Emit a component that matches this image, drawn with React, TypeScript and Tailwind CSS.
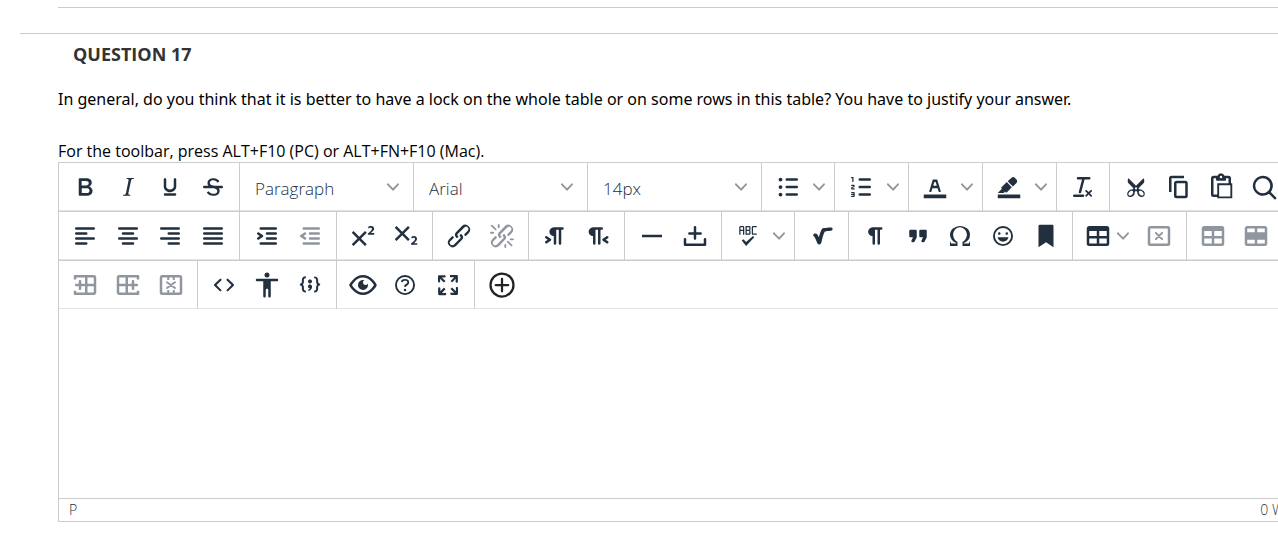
import type { ReactNode } from "react";

const bar = (x1: number, x2: number, y: number) => `M${x1} ${y}H${x2}`;

function Svg({ children }: { children: ReactNode }) {
  return (
    <svg viewBox="0 0 24 24" className="size-[30px] shrink-0" fill="currentColor" aria-hidden="true">
      {children}
    </svg>
  );
}

function Lines({ d }: { d: string }) {
  return <path d={d} fill="none" stroke="currentColor" strokeWidth="2" strokeLinecap="round" />;
}

const LINK =
  "M6.2 12.3a1 1 0 011.4 1.4l-2.1 2a2 2 0 102.7 2.8l4.8-4.8a1 1 0 000-1.4 1 1 0 111.4-1.3 2.9 2.9 0 010 4L9.6 20a3.9 3.9 0 01-5.5-5.5l2-2zm11.6-.6a1 1 0 01-1.4-1.4l2-2a2 2 0 10-2.6-2.8L11 10.3a1 1 0 000 1.4A1 1 0 119.6 13a2.9 2.9 0 010-4L14.4 4a3.9 3.9 0 015.5 5.5l-2 2z";

const TABLE =
  "M19 4a2 2 0 012 2v12a2 2 0 01-2 2H5a2 2 0 01-2-2V6c0-1.1.9-2 2-2h14zM5 14v4h6v-4H5zm14 0h-6v4h6v-4zm0-6h-6v4h6V8zM5 12h6V8H5v4z";

const COLUMN_BEFORE = (
  <>
    <path
      fillRule="evenodd"
      d="M19 4a2 2 0 012 2v12c0 1.1-.9 2-2 2H4a1 1 0 01-1-1v-2.5h2V18h7V6H5v1.5H3V5a1 1 0 011-1h15zm0 9h-5v5h5v-5zm0-7h-5v5h5V6z"
    />
    <path d="M8 8c.5 0 1 .4 1 .9V11h2a1 1 0 01.1 2H9v2a1 1 0 01-2 .1V13H5a1 1 0 01-.1-2H7V9c0-.6.4-1 1-1z" />
  </>
);

const ICONS: Record<string, ReactNode> = {
  bold: (
    <path d="M7.8 19c-.3 0-.5 0-.6-.2l-.2-.5V5.7c0-.2 0-.4.2-.5l.6-.2h5c1.5 0 2.7.3 3.5 1 .7.6 1.1 1.4 1.1 2.5a3 3 0 01-.6 1.9c-.4.6-1 1-1.6 1.2.4.1.9.3 1.3.6s.8.7 1 1.2c.4.4.5 1 .5 1.6 0 1.3-.4 2.3-1.3 3-.8.7-2.1 1-3.8 1H7.8zm5-8.3c.6 0 1.2-.1 1.6-.5.4-.3.6-.7.6-1.3 0-1.1-.8-1.7-2.3-1.7H9.3v3.5h3.4zm.5 6c.7 0 1.3-.1 1.7-.4.4-.4.6-.9.6-1.5s-.2-1-.7-1.4c-.4-.3-1-.4-2-.4H9.4v3.8h4z" />
  ),
  italic: (
    <path d="M16.7 4.7l-.1.9h-.3c-.6 0-1 0-1.4.3-.3.3-.4.6-.5 1.1l-2.1 9.8v.6c0 .5.4.8 1.4.8h.2l-.2.8H8l.2-.8h.2c1.1 0 1.8-.5 2-1.5l2-9.8.1-.5c0-.6-.4-.8-1.4-.8h-.3l.2-.9h5.8z" />
  ),
  underline: (
    <path d="M16 5c.6 0 1 .4 1 1v5.5a4 4 0 01-.4 1.8l-1 1.4a5.3 5.3 0 01-5.5 1 5 5 0 01-1.6-1c-.5-.4-.8-.9-1.1-1.4a4 4 0 01-.4-1.8V6c0-.6.4-1 1-1s1 .4 1 1v5.5c0 .3 0 .6.2 1l.6.7a3.3 3.3 0 002.2.8 3.4 3.4 0 002.2-.8c.3-.2.4-.5.6-.8l.2-.9V6c0-.6.4-1 1-1zM8 17h8c.6 0 1 .4 1 1s-.4 1-1 1H8a1 1 0 010-2z" />
  ),
  strike: (
    <>
      <path d="M15.6 8.5c-.5-.7-1-1.1-1.3-1.3-.6-.4-1.3-.6-2-.6-2.7 0-2.8 1.7-2.8 2.1 0 1.6 1.8 2 3.2 2.3 4.4.9 4.6 2.8 4.6 3.9 0 1.4-.7 4.1-5 4.1A6.2 6.2 0 017 16.4l1.5-1.1c.4.6 1.6 2 3.7 2 1.6 0 2.5-.4 3-1.2.4-.8.3-2-.8-2.6-.7-.4-1.6-.7-2.9-1-1-.2-3.9-.8-3.9-3.6C7.6 6 10.3 5 12.4 5c2.9 0 4.2 1.6 4.7 2.4l-1.5 1.1z" />
      <path d="M5 11h14a1 1 0 010 2H5a1 1 0 010-2z" />
    </>
  ),
  bullets: (
    <>
      <Lines d={bar(11, 19, 6) + bar(11, 19, 12) + bar(11, 19, 18)} />
      <circle cx="6" cy="6" r="1.5" />
      <circle cx="6" cy="12" r="1.5" />
      <circle cx="6" cy="18" r="1.5" />
    </>
  ),
  numbers: (
    <>
      <Lines d={bar(11, 19, 6) + bar(11, 19, 12) + bar(11, 19, 18)} />
      <path d="M6 4v3.5c0 .3-.2.5-.5.5a.5.5 0 01-.5-.5V5h-.5a.5.5 0 010-1H6zm-1 8.8l.2.2h1.3c.3 0 .5.2.5.5s-.2.5-.5.5H4.9a1 1 0 01-.9-1V13c0-.4.3-.8.6-1l1.2-.4.2-.3a.2.2 0 00-.2-.2H4.5a.5.5 0 01-.5-.5c0-.3.2-.5.5-.5h1.6c.5 0 .9.4.9 1v.1c0 .4-.3.8-.6 1l-1.2.4-.2.3zM7 17v2c0 .6-.4 1-1 1H4.5a.5.5 0 010-1h1.2c.2 0 .3-.1.3-.3 0-.2-.1-.3-.3-.3H4.4a.4.4 0 110-.8h1.3c.2 0 .3-.1.3-.3 0-.2-.1-.3-.3-.3H4.5a.5.5 0 110-1H6c.6 0 1 .4 1 1z" />
    </>
  ),
  textColor: (
    <>
      <path d="M3 18h18v3H3z" />
      <path d="M8.7 16h-.8a.5.5 0 01-.5-.6l2.7-9c.1-.3.3-.4.5-.4h2.8c.2 0 .4.1.5.4l2.7 9a.5.5 0 01-.5.6h-.8a.5.5 0 01-.4-.4l-.7-2.2c0-.3-.3-.4-.5-.4h-3.4c-.2 0-.4.1-.5.4l-.7 2.2c0 .3-.2.4-.4.4zm2.6-7.6l-.6 2a.5.5 0 00.5.6h1.6a.5.5 0 00.5-.6l-.6-2c0-.3-.3-.4-.5-.4h-.4c-.2 0-.4.1-.5.4z" />
    </>
  ),
  highlight: (
    <>
      <path d="M3 18h18v3H3z" />
      <path d="M7.7 16.7H3l3.3-3.3-.7-.8L10.2 8l4 4.1-4 4.2c-.2.2-.6.2-.8 0l-.6-.7-1.1 1.1zm5-7.5L11 7.4l3-2.9a2 2 0 012.6 0L18 6c.7.7.7 2 0 2.7l-2.9 2.9-1.8-1.8-.6-.6z" />
    </>
  ),
  clear: (
    <path d="M13.2 6a1 1 0 010 .2l-2.6 10a1 1 0 01-1 .8h-.2a.8.8 0 01-.8-1l2.6-10H8a1 1 0 110-2h9a1 1 0 010 2h-3.8zM5 18h7a1 1 0 010 2H5a1 1 0 010-2zm13 1.5L16.5 18 15 19.5a.7.7 0 01-1-1l1.5-1.5-1.5-1.5a.7.7 0 011-1l1.5 1.5 1.5-1.5a.7.7 0 011 1L17.5 17l1.5 1.5a.7.7 0 01-1 1z" />
  ),
  cut: (
    <path
      fillRule="evenodd"
      d="M18 15c.6.7 1 1.4 1 2.3 0 .8-.2 1.5-.7 2l-.8.5-1 .2c-.4 0-.8 0-1.2-.3a3.9 3.9 0 01-2.1-2.2c-.2-.5-.3-1-.2-1.5l-1-1-1 1c0 .5 0 1-.2 1.5-.1.5-.4 1-.9 1.4-.3.4-.7.6-1.2.8l-1.2.3c-.4 0-.7 0-1-.2-.3 0-.6-.3-.8-.5-.5-.5-.8-1.2-.7-2 0-.9.4-1.6 1-2.2A3.7 3.7 0 018.6 14H9l1-1-4-4-.5-1a3.3 3.3 0 010-2c0-.4.3-.7.5-1l6 6 6-6 .5 1a3.3 3.3 0 010 2c0 .4-.3.7-.5 1l-4 4 1 1h.5c.4 0 .8 0 1.2.3.5.2.9.4 1.2.8zM9.500 15.400c-.7-.6-2-.3-2.800.5s-1.100 2-.5 2.600 1.800.4 2.600-.4 1.300-2.100.7-2.700zm5 0c-.6.6-.1 1.900.7 2.700s2 1 2.600.4.300-1.800-.5-2.600-2.100-1.100-2.800-.5zM12 12.200a.9.9 0 100 1.800.9.9 0 000-1.800z"
    />
  ),
  copy: (
    <path d="M16 3H6a2 2 0 00-2 2v11h2V5h10V3zm1 4a2 2 0 012 2v10a2 2 0 01-2 2h-7a2 2 0 01-2-2V9c0-1.2.9-2 2-2h7zm0 12V9h-7v10h7z" />
  ),
  paste: (
    <path
      fillRule="evenodd"
      d="M18 9V5h-2v1c0 .6-.4 1-1 1H9a1 1 0 01-1-1V5H6v13h3V9h9zM9 20H6a2 2 0 01-2-2V5c0-1.1.9-2 2-2h3.2A3 3 0 0112 1a3 3 0 012.8 2H18a2 2 0 012 2v4h1v12H9v-1zm1.5-9.5v9h9v-9h-9zM12 3a1 1 0 00-1 1c0 .5.4 1 1 1s1-.5 1-1-.4-1-1-1z"
    />
  ),
  search: (
    <path d="M16 17.3a8 8 0 111.4-1.4l4.3 4.4a1 1 0 01-1.4 1.4l-4.4-4.3zm-5-.3a6 6 0 100-12 6 6 0 000 12z" />
  ),
  left: <Lines d={bar(5, 19, 6) + bar(5, 13, 10) + bar(5, 19, 14) + bar(5, 13, 18)} />,
  center: <Lines d={bar(5, 19, 6) + bar(8, 16, 10) + bar(5, 19, 14) + bar(8, 16, 18)} />,
  right: <Lines d={bar(5, 19, 6) + bar(11, 19, 10) + bar(5, 19, 14) + bar(11, 19, 18)} />,
  justify: <Lines d={bar(5, 19, 6) + bar(5, 19, 10) + bar(5, 19, 14) + bar(5, 19, 18)} />,
  indent: (
    <>
      <Lines d={bar(7, 19, 6) + bar(12, 19, 10) + bar(12, 19, 14) + bar(7, 19, 18)} />
      <path d="M4.4 13.2L6.2 12l-1.8-1.2a1 1 0 011.2-1.6l3 2a1 1 0 010 1.6l-3 2a1 1 0 11-1.2-1.6z" />
    </>
  ),
  outdent: (
    <>
      <Lines d={bar(7, 19, 6) + bar(12, 19, 10) + bar(12, 19, 14) + bar(7, 19, 18)} />
      <path d="M8.6 13.2a1 1 0 01-1.2 1.6l-3-2a1 1 0 010-1.6l3-2a1 1 0 011.2 1.6L6.8 12l1.8 1.2z" />
    </>
  ),
  superscript: (
    <path d="M15 9.4L10.4 14l4.6 4.6-1.4 1.4L9 15.4 4.4 20 3 18.6 7.6 14 3 9.4 4.4 8 9 12.6 13.6 8 15 9.4zm5.9 1.6h-5v-1l1-.8 1.7-1.6c.3-.5.5-.9.5-1.3 0-.3 0-.5-.2-.7-.2-.2-.5-.3-.9-.3l-.8.2-.7.4-.4-1.2c.2-.2.5-.4 1-.5.3-.2.8-.3 1.3-.3.8 0 1.5.2 1.9.6.4.4.6 1 .6 1.6 0 .5-.2 1-.5 1.5l-1.5 1.4-.5.5v.1h2.5V11z" />
  ),
  subscript: (
    <path d="M10.4 10l4.6 4.6-1.4 1.4L9 11.4 4.4 16 3 14.6 7.6 10 3 5.4 4.4 4 9 8.6 13.6 4 15 5.4 10.4 10zM21 19h-5v-1l1-.8 1.7-1.6c.3-.4.5-.8.5-1.2 0-.3 0-.6-.2-.7-.2-.2-.5-.3-.9-.3a2 2 0 00-.8.2l-.7.3-.4-1.1 1-.6 1.2-.2c.8 0 1.4.3 1.8.7.4.4.6.9.6 1.5s-.2 1.1-.5 1.6a8 8 0 01-1.3 1.3l-.6.6h2.6V19z" />
  ),
  link: <path d={LINK} />,
  unlink: (
    <>
      <path d={LINK} />
      <path d="M7.6 6.3a.8.8 0 01-1 1.1L3.3 4.2a.7.7 0 111-1l3.2 3.1zM5.1 8.6a.8.8 0 010 1.5H3a.8.8 0 010-1.5H5zm5-3.5a.8.8 0 01-1.5 0V3a.8.8 0 011.5 0V5zm6 11.8a.8.8 0 011-1l3.2 3.2a.8.8 0 01-1 1L16 17zm-2.2 2a.8.8 0 011.5 0V21a.8.8 0 01-1.5 0V19zm5-3.5a.7.7 0 110-1.5H21a.8.8 0 010 1.5H19z" />
    </>
  ),
  ltr: (
    <path d="M11 5h7a1 1 0 010 2h-1v11a1 1 0 01-2 0V7h-2v11a1 1 0 01-2 0v-6c-.5 0-1 0-1.4-.3A3.4 3.4 0 017.8 10a3.3 3.3 0 010-2.8 3.4 3.4 0 011.8-1.8L11 5zM4.4 16.2L6.2 15l-1.8-1.2a1 1 0 011.2-1.6l3 2a1 1 0 010 1.6l-3 2a1 1 0 11-1.2-1.6z" />
  ),
  rtl: (
    <path d="M8 5h7a1 1 0 010 2h-1v11a1 1 0 01-2 0V7h-2v11a1 1 0 01-2 0v-6c-.5 0-1 0-1.4-.3A3.4 3.4 0 014.8 10a3.3 3.3 0 010-2.8 3.4 3.4 0 011.8-1.8L8 5zm12 11.2a1 1 0 11-1.2 1.6l-3-2a1 1 0 010-1.6l3-2a1 1 0 111.2 1.6L18.2 15l1.8 1.2z" />
  ),
  rule: <path d="M4 11h16v2H4z" />,
  nbsp: (
    <>
      <path d="M3 14.5a1 1 0 012 0V18h14v-3.5a1 1 0 012 0V19a1 1 0 01-1 1H4a1 1 0 01-1-1z" />
      <Lines d="M12 5v9M7.500 10h9" />
    </>
  ),
  spell: (
    <path d="M6 8v3H5V5c0-.3.1-.5.3-.7.2-.2.4-.3.7-.3h2c.3 0 .5.1.7.3.2.2.3.4.3.7v6H8V8H6zm0-3v2h2V5H6zm13 0h-3v5h3v1h-3a1 1 0 01-.7-.3 1 1 0 01-.3-.7V5c0-.3.1-.5.3-.7.2-.2.4-.3.7-.3h3v1zm-5 1.5l-.1.7c-.1.2-.3.3-.6.3.3 0 .5.1.6.3l.1.7V10c0 .3-.1.5-.3.7a1 1 0 01-.7.3h-3V4h3c.3 0 .5.1.7.3.2.2.3.4.3.7v1.5zM13 10V8h-2v2h2zm0-3V5h-2v2h2zm3 5l1 1-6.5 7L7 15.5l1.3-1 2.2 2.2L16 12z" />
  ),
  math: (
    <path d="M5 11.3c-.1-.9.8-1.4 1.6-1.3 1.4.2 2.2 1.2 2.9 2.9.8-2.9 1.5-5.2 2.5-6.5.5-.6 1.1-.8 1.9-.8 1.3 0 3.2-.5 5-.5 1 0 1.6.5 1.6 1.3s-.6 1.2-1.5 1.3c-1.7.2-3.500.2-4.800.8-1 1.6-1.8 4.500-2.600 8.300-.3 1.3-.8 1.9-1.700 1.900s-1.400-.5-1.900-1.600c-.9-2-1.500-3.600-2.200-4.500-.4-.5-.7-.8-.8-1.300z" />
  ),
  pilcrow: (
    <path d="M10 5h7a1 1 0 010 2h-1v11a1 1 0 01-2 0V7h-2v11a1 1 0 01-2 0v-6c-.5 0-1 0-1.4-.3A3.4 3.4 0 016.8 10a3.3 3.3 0 010-2.8 3.4 3.4 0 011.8-1.8L10 5z" />
  ),
  quote: (
    <path d="M7.5 17h.9c.4 0 .7-.2.9-.6L11 13V8c0-.6-.4-1-1-1H6a1 1 0 00-1 1v4c0 .6.4 1 1 1h2l-1.3 2.7a1 1 0 00.8 1.3zm8 0h.9c.4 0 .7-.2.9-.6L19 13V8c0-.6-.4-1-1-1h-4a1 1 0 00-1 1v4c0 .6.4 1 1 1h2l-1.3 2.7a1 1 0 00.8 1.3z" />
  ),
  omega: (
    <path d="M15 18h4l1-2v4h-6v-3.3l1.4-1a6 6 0 001.8-2.9 6.3 6.3 0 00-.1-4.1 5.8 5.8 0 00-3-3.2c-.6-.3-1.3-.5-2.1-.5a5.1 5.1 0 00-3.9 1.8 6.3 6.3 0 00-1.3 6 6.2 6.2 0 001.8 3l1.4.9V20H4v-4l1 2h4v-.5l-2-1L5.4 15A6.5 6.5 0 014 11c0-1 .2-1.9.6-2.7A7 7 0 016.3 6C7.1 5.4 8 5 9 4.5c1-.3 2-.5 3.1-.5a8.8 8.8 0 015.7 2 7 7 0 011.7 2.3 6 6 0 01.2 4.8c-.2.7-.6 1.3-1 1.9a7.6 7.6 0 01-3.6 2.5v.5z" />
  ),
  emoji: (
    <path d="M9 11c.6 0 1-.4 1-1s-.4-1-1-1a1 1 0 00-1 1c0 .6.4 1 1 1zm6 0c.6 0 1-.4 1-1s-.4-1-1-1a1 1 0 00-1 1c0 .6.4 1 1 1zm-3 5.5c2.1 0 4-1.5 4.4-3.5H7.6c.5 2 2.3 3.5 4.4 3.5zM12 4a8 8 0 100 16 8 8 0 000-16zm0 14.5a6.5 6.5 0 110-13 6.5 6.5 0 010 13z" />
  ),
  bookmark: <path d="M6 4v17l6-4 6 4V4c0-.6-.4-1-1-1H7a1 1 0 00-1 1z" />,
  table: <path fillRule="evenodd" d={TABLE} />,
  tableDelete: (
    <>
      <path fillRule="evenodd" d="M19 4a2 2 0 012 2v12a2 2 0 01-2 2H5a2 2 0 01-2-2V6c0-1.1.9-2 2-2h14zm0 2H5v12h14V6z" />
      <path d="M9.5 9.5l5 5m0-5l-5 5" fill="none" stroke="currentColor" strokeWidth="1.6" strokeLinecap="round" />
    </>
  ),
  rowProps: (
    <path
      fillRule="evenodd"
      d="M19 4a2 2 0 012 2v12a2 2 0 01-2 2H5a2 2 0 01-2-2V6c0-1.1.9-2 2-2h14zM5 15v3h6v-3H5zm14 0h-6v3h6v-3zm0-9h-6v3h6V6zM5 9h6V6H5v3z"
    />
  ),
  colBefore: COLUMN_BEFORE,
  colAfter: <g transform="matrix(-1 0 0 1 24 0)">{COLUMN_BEFORE}</g>,
  colDelete: (
    <>
      <path fillRule="evenodd" d="M19 4a2 2 0 012 2v12a2 2 0 01-2 2H5a2 2 0 01-2-2V6c0-1.1.9-2 2-2h14zm0 2H5v12h14V6z" />
      <path d="M9 5h1.600v3H9zM13.400 5H15v3h-1.600zM9 16h1.600v3H9zM13.400 16H15v3h-1.600z" />
      <path d="M8.800 9.800l6.400 4.600m0-4.600l-6.400 4.600" fill="none" stroke="currentColor" strokeWidth="1.600" strokeLinecap="round" />
    </>
  ),
  code: (
    <path d="M9.8 15.7c.3.3.3.8 0 1-.3.4-.9.4-1.2 0l-4.4-4.1a.8.8 0 010-1.2l4.4-4.2c.3-.3.9-.3 1.2 0 .3.3.3.8 0 1.1L6 12l3.8 3.7zm4.4 0c-.3.3-.3.8 0 1 .3.4.9.4 1.2 0l4.4-4.1c.3-.3.3-.8 0-1.2l-4.4-4.2a.8.8 0 00-1.2 0c-.3.3-.3.8 0 1.1L18 12l-3.8 3.7z" />
  ),
  person: (
    <path d="M12 2a2 2 0 012 2 2 2 0 01-2 2 2 2 0 01-2-2c0-1.1.9-2 2-2zm8 7h-5v12c0 .6-.4 1-1 1a1 1 0 01-1-1v-5c0-.6-.4-1-1-1a1 1 0 00-1 1v5c0 .6-.4 1-1 1a1 1 0 01-1-1V9H4a1 1 0 110-2h16c.6 0 1 .4 1 1s-.4 1-1 1z" />
  ),
  sample: (
    <path
      transform="translate(0 -1.5)"
      d="M7.1 11a2.8 2.8 0 01-.8 2 2.8 2.8 0 01.8 2v1.7c0 .3.1.6.4.8.2.3.5.4.8.4.3 0 .4.2.4.4v.8c0 .2-.1.4-.4.4-.7 0-1.4-.3-2-.8-.5-.6-.8-1.3-.8-2V15c0-.3-.1-.6-.4-.8-.2-.3-.5-.4-.8-.4a.4.4 0 01-.4-.4v-.8c0-.2.2-.4.4-.4.3 0 .6-.1.8-.4.3-.2.4-.5.4-.8V9.3c0-.7.3-1.4.8-2 .6-.5 1.3-.8 2-.8.3 0 .4.2.4.4v.8c0 .2-.1.4-.4.4-.3 0-.6.1-.8.4-.3.2-.4.5-.4.8V11zm9.8 0V9.3c0-.3-.1-.6-.4-.8-.2-.3-.5-.4-.8-.4a.4.4 0 01-.4-.4V7c0-.2.1-.4.4-.4.7 0 1.4.3 2 .8.5.6.8 1.3.8 2V11c0 .3.1.6.4.8.2.3.5.4.8.4.2 0 .4.2.4.4v.8c0 .2-.2.4-.4.4-.3 0-.6.1-.8.4-.3.2-.4.5-.4.8v1.7c0 .7-.3 1.4-.8 2-.6.5-1.3.8-2 .8a.4.4 0 01-.4-.4v-.8c0-.2.1-.4.4-.4.3 0 .6-.1.8-.4.3-.2.4-.5.4-.8V15a2.8 2.8 0 01.8-2 2.8 2.8 0 01-.8-2zm-3.3-.4c0 .4-.1.8-.5 1.1-.3.3-.7.5-1.1.5-.4 0-.8-.2-1.1-.5-.4-.3-.5-.7-.5-1.1 0-.5.1-.9.5-1.2.3-.3.7-.4 1.1-.4.4 0 .8.1 1.1.4.4.3.5.7.5 1.2zM12 13c.4 0 .8.1 1.1.5.4.3.5.7.5 1.1 0 1-.1 1.6-.5 2a3 3 0 01-1.1 1c-.4.3-.8.4-1.1.4a.5.5 0 01-.5-.5V17a3 3 0 001-.2l.6-.6c-.6 0-1-.2-1.3-.5-.2-.3-.3-.7-.3-1 0-.5.1-1 .5-1.2.3-.4.7-.5 1.1-.5z"
    />
  ),
  eye: (
    <path d="M3.5 12.5c.5.8 1.1 1.6 1.8 2.3 2 2 4.2 3.2 6.7 3.2s4.7-1.2 6.7-3.2a16.2 16.2 0 002.1-2.8 15.7 15.7 0 00-2.1-2.8c-2-2-4.2-3.2-6.7-3.2a9.3 9.3 0 00-6.7 3.2A16.2 16.2 0 003.2 12c0 .2.2.3.3.5zm-2.4-1l.7-1.2L4 7.8C6.2 5.4 8.9 4 12 4c3 0 5.8 1.4 8.1 3.8a18.2 18.2 0 012.8 3.7v1l-.7 1.2a18.1 18.1 0 01-2.1 2.5c-2.3 2.4-5 3.8-8.1 3.8-3 0-5.8-1.4-8.1-3.8a18.2 18.2 0 01-2.8-3.7 1 1 0 010-1zm12-3.3a2 2 0 102.7 2.6 4 4 0 11-2.6-2.6z" />
  ),
  help: (
    <>
      <circle cx="12" cy="12" r="7.25" fill="none" stroke="currentColor" strokeWidth="1.5" />
      <path d="M9.6 9.7a.7.7 0 01-.7-.8c0-1.1 1.5-1.8 3.2-1.8 1.8 0 3.2.8 3.2 2.4 0 1.4-.4 2.1-1.5 2.8-.2 0-.3.1-.3.2a2 2 0 00-.8.8.8.8 0 01-1.4-.6c.3-.7.8-1 1.3-1.5l.4-.2c.7-.4.8-.6.8-1.5 0-.5-.6-.9-1.7-.9-.5 0-1 .1-1.4.3-.2 0-.3.1-.3.2 0 .4-.4.6-.8.6z" />
      <circle cx="12" cy="16" r="1" />
    </>
  ),
  fullscreen: (
    <path d="M15.3 10l-1.2-1.3 2.9-3h-2.3a.9.9 0 110-1.7H19c.5 0 .9.4.9.9v4.4a.9.9 0 11-1.8 0V7l-2.9 3zm0 4l3 3v-2.3a.9.9 0 111.7 0V19c0 .5-.4.9-.9.9h-4.4a.9.9 0 110-1.8H17l-3-2.9 1.3-1.2zM10 15.4l-2.9 3h2.3a.9.9 0 110 1.7H5a.9.9 0 01-.9-.9v-4.4a.9.9 0 111.8 0V17l2.9-3 1.2 1.3zM8.7 10L5.7 7v2.3a.9.9 0 01-1.7 0V5c0-.5.4-.9.9-.9h4.4a.9.9 0 010 1.8H7l3 2.9-1.3 1.2z" />
  ),
  add: (
    <g fill="none" stroke="#222222" strokeWidth="1.8" strokeLinecap="round">
      <circle cx="12" cy="12" r="9.2" />
      <path d="M12 7v10M7 12h10" />
    </g>
  ),
};

function Chevron() {
  return (
    <svg viewBox="0 0 10 10" className="size-3 shrink-0 text-[#8f949b]" fill="currentColor" aria-hidden="true">
      <path d="M8.7 2.2c.3-.3.8-.3 1 0 .4.4.4.9 0 1.2L5.7 7.8c-.3.3-.9.3-1.2 0L.2 3.4a.8.8 0 010-1.2c.3-.3.8-.3 1.1 0L5 6l3.7-3.8z" />
    </svg>
  );
}

function Tool({ icon, label, disabled }: { icon: string; label: string; disabled?: boolean }) {
  return (
    <button
      type="button"
      aria-label={label}
      disabled={disabled}
      className="flex h-full min-w-0 flex-1 items-center justify-center disabled:text-[#9096a0]"
    >
      <Svg>{ICONS[icon]}</Svg>
    </button>
  );
}

function SplitTool({ icon, label }: { icon: string; label: string }) {
  return (
    <>
      <Tool icon={icon} label={label} />
      <button type="button" aria-label={`${label} options`} className="flex h-full w-[21px] items-center justify-center">
        <Chevron />
      </button>
    </>
  );
}

function Group({ width, children }: { width: string; children: ReactNode }) {
  return <div className={`flex h-12 shrink-0 items-center border-r border-[#cccccc] px-[5px] ${width}`}>{children}</div>;
}

function Picker({ label, options }: { label: string; options: string[] }) {
  return (
    <Group width="w-[174px]">
      <div className="grid flex-1 items-center">
        <select
          aria-label={label}
          className="col-start-1 row-start-1 h-11 w-full appearance-none bg-transparent pt-1 pr-8 pl-[10px] text-[17px] leading-7 font-light outline-none"
        >
          {options.map((option) => (
            <option key={option}>{option}</option>
          ))}
        </select>
        <span className="pointer-events-none col-start-1 row-start-1 mr-[9px] justify-self-end">
          <Chevron />
        </span>
      </div>
    </Group>
  );
}

const ROW = "flex h-[49px] items-start shadow-[inset_0_-1px_0_#cccccc,inset_0_-2px_0_#e3e3e3]";

export default function App() {
  return (
    <main className="overflow-hidden bg-white pt-[7px] pb-8 font-['Open_Sans','Noto_Sans',sans-serif] text-base text-black">
      <hr className="ml-[58px] border-t border-[#cccccc]" />
      <hr className="mt-[25px] ml-5 border-t border-[#cccccc]" />
      <section className="ml-[58px]">
        <h3 className="mt-2 ml-[15px] text-lg leading-6 font-bold text-[#333333]">QUESTION 17</h3>
        <p className="mt-[21px] font-['Noto_Sans','Open_Sans',sans-serif] leading-6 whitespace-nowrap">
          In general, do you think that it is better to have a lock on the whole table or on some rows in this table? You
          have to justify your answer.
        </p>
        <p className="mt-7 leading-6">For the toolbar, press ALT+F10 (PC) or ALT+FN+F10 (Mac).</p>

        <div className="-mt-px w-[calc(100%+54px)] border border-[#cccccc] text-[#222f3e]">
          <div role="toolbar" aria-label="Editor toolbar">
            <div className={ROW}>
              <Group width="w-[181px]">
                <Tool icon="bold" label="Bold" />
                <Tool icon="italic" label="Italic" />
                <Tool icon="underline" label="Underline" />
                <Tool icon="strike" label="Strikethrough" />
              </Group>
              <Picker label="Blocks" options={["Paragraph", "Heading 1", "Heading 2"]} />
              <Picker label="Fonts" options={["Arial", "Georgia", "Verdana"]} />
              <Picker label="Font sizes" options={["14px", "16px", "18px"]} />
              <Group width="w-[73px]">
                <SplitTool icon="bullets" label="Bullet list" />
              </Group>
              <Group width="w-[74px]">
                <SplitTool icon="numbers" label="Numbered list" />
              </Group>
              <Group width="w-[74px]">
                <SplitTool icon="textColor" label="Text color" />
              </Group>
              <Group width="w-[74px]">
                <SplitTool icon="highlight" label="Background color" />
              </Group>
              <Group width="w-[53px]">
                <Tool icon="clear" label="Clear formatting" />
              </Group>
              <Group width="w-[181px]">
                <Tool icon="cut" label="Cut" />
                <Tool icon="copy" label="Copy" />
                <Tool icon="paste" label="Paste" />
                <Tool icon="search" label="Find and replace" />
              </Group>
            </div>
            <div className={ROW}>
              <Group width="w-[181px]">
                <Tool icon="left" label="Align left" />
                <Tool icon="center" label="Align center" />
                <Tool icon="right" label="Align right" />
                <Tool icon="justify" label="Justify" />
              </Group>
              <Group width="w-[97px]">
                <Tool icon="indent" label="Increase indent" />
                <Tool icon="outdent" label="Decrease indent" disabled />
              </Group>
              <Group width="w-[96px]">
                <Tool icon="superscript" label="Superscript" />
                <Tool icon="subscript" label="Subscript" />
              </Group>
              <Group width="w-[96px]">
                <Tool icon="link" label="Insert link" />
                <Tool icon="unlink" label="Remove link" disabled />
              </Group>
              <Group width="w-[96px]">
                <Tool icon="ltr" label="Left to right" />
                <Tool icon="rtl" label="Right to left" />
              </Group>
              <Group width="w-[97px]">
                <Tool icon="rule" label="Horizontal line" />
                <Tool icon="nbsp" label="Nonbreaking space" />
              </Group>
              <Group width="w-[73px]">
                <SplitTool icon="spell" label="Spellcheck" />
              </Group>
              <Group width="w-[54px]">
                <Tool icon="math" label="Math editor" />
              </Group>
              <Group width="w-[224px]">
                <Tool icon="pilcrow" label="Show invisible characters" />
                <Tool icon="quote" label="Blockquote" />
                <Tool icon="omega" label="Special character" />
                <Tool icon="emoji" label="Emoticons" />
                <Tool icon="bookmark" label="Anchor" />
              </Group>
              <Group width="w-[114px]">
                <button type="button" aria-label="Table" className="flex h-full flex-1 items-center gap-1 pl-[5px]">
                  <Svg>{ICONS.table}</Svg>
                  <Chevron />
                </button>
                <div className="flex h-full w-11">
                  <Tool icon="tableDelete" label="Delete table" disabled />
                </div>
              </Group>
              <Group width="w-[96px]">
                <Tool icon="table" label="Cell properties" disabled />
                <Tool icon="rowProps" label="Row properties" disabled />
              </Group>
            </div>
            <div className="flex h-12 items-start shadow-[inset_0_-1px_0_#e3e3e3]">
              <Group width="w-[139px]">
                <Tool icon="colBefore" label="Insert column before" disabled />
                <Tool icon="colAfter" label="Insert column after" disabled />
                <Tool icon="colDelete" label="Delete column" disabled />
              </Group>
              <Group width="w-[139px]">
                <Tool icon="code" label="Source code" />
                <Tool icon="person" label="Accessibility checker" />
                <Tool icon="sample" label="Code sample" />
              </Group>
              <Group width="w-[138px]">
                <Tool icon="eye" label="Preview" />
                <Tool icon="help" label="Help" />
                <Tool icon="fullscreen" label="Fullscreen" />
              </Group>
              <div className="flex h-12 w-[54px] px-[5px]">
                <Tool icon="add" label="Add content" />
              </div>
            </div>
          </div>
          <textarea aria-label="Answer" className="block h-[189px] w-full resize-none p-3 outline-none" />
          <div className="flex h-[23px] items-center justify-between border-t border-[#cccccc] px-[10px] text-sm leading-5 font-light text-[#222f3e]">
            <span>P</span>
            <span>0 WORDS</span>
          </div>
        </div>
      </section>
    </main>
  );
}
